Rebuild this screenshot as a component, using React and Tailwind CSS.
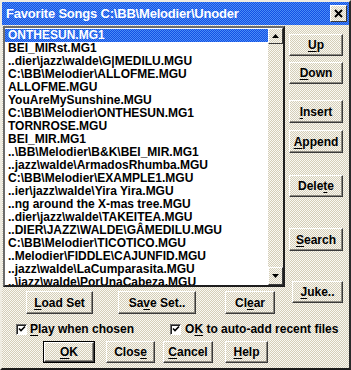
import React from "react";

const DITHER =
  "bg-[image:repeating-conic-gradient(#d4cdb8_0%_25%,#faf9f3_0%_50%)] bg-[length:2px_2px]";
const BLUE =
  "bg-[image:repeating-conic-gradient(#1450e4_0%_25%,#4a8cf6_0%_50%)] bg-[length:2px_2px]";

const items = [
  "ONTHESUN.MG1",
  "BEI_MIRst.MG1",
  "..dier\\jazz\\walde\\G|MEDILU.MGU",
  "C:\\BB\\Melodier\\ALLOFME.MGU",
  "ALLOFME.MGU",
  "YouAreMySunshine.MGU",
  "C:\\BB\\Melodier\\ONTHESUN.MG1",
  "TORNROSE.MGU",
  "BEI_MIR.MG1",
  "..\\BB\\Melodier\\B&K\\BEI_MIR.MG1",
  "..jazz\\walde\\ArmadosRhumba.MGU",
  "C:\\BB\\Melodier\\EXAMPLE1.MGU",
  "..ier\\jazz\\walde\\Yira Yira.MGU",
  "..ng around the X-mas tree.MGU",
  "..dier\\jazz\\walde\\TAKEITEA.MGU",
  "..DIER\\JAZZ\\WALDE\\GÂMEDILU.MGU",
  "C:\\BB\\Melodier\\TICOTICO.MGU",
  "..Melodier\\FIDDLE\\CAJUNFID.MGU",
  "..jazz\\walde\\LaCumparasita.MGU",
  "..\\jazz\\walde\\PorUnaCabeza.MGU",
];

function Label({ pre = "", u, post = "" }) {
  return (
    <span>
      {pre}
      <span className="underline underline-offset-2">{u}</span>
      {post}
    </span>
  );
}

function Btn({ className = "", children }) {
  return (
    <div
      className={`flex items-center justify-center border border-t-white border-l-white border-r-[#3a3a3a] border-b-[#3a3a3a] shadow-[inset_-1px_-1px_0_#8a877e] text-[12px] font-bold text-black ${DITHER} ${className}`}
    >
      {children}
    </div>
  );
}

function Check({ className = "" }) {
  return (
    <div
      className={`w-[11px] h-[11px] bg-white border border-t-[#6b6b6b] border-l-[#6b6b6b] border-r-white border-b-white shadow-[inset_1px_1px_0_#222] flex items-center justify-center ${className}`}
    >
      <svg width="8" height="8" viewBox="0 0 8 8">
        <path d="M1 3.5 L3 5.5 L7 1.5" stroke="#000" strokeWidth="1.6" fill="none" />
      </svg>
    </div>
  );
}

function Arrow({ down }) {
  return (
    <svg width="7" height="4" viewBox="0 0 7 4">
      <path d={down ? "M0 0 H7 L3.5 4 Z" : "M0 4 H7 L3.5 0 Z"} fill="#000" />
    </svg>
  );
}

export default function App() {
  return (
    <div className="w-[351px] h-[370px] overflow-hidden font-['Liberation_Sans',Arial,sans-serif]">
      <div
        className={`w-full h-full flex flex-col border-2 border-t-[#efece2] border-l-[#efece2] border-r-[#2a2a2a] border-b-[#1a1a1a] ${DITHER}`}
      >
        {/* Title bar */}
        <div className={`h-[23px] flex items-center justify-between pl-[4px] pr-[2px] ${BLUE}`}>
          <span className="text-white font-bold text-[13px] tracking-[-0.2px] whitespace-nowrap">
            Favorite Songs C:\BB\Melodier\Unoder
          </span>
          <div
            className={`w-[17px] h-[17px] flex items-center justify-center border border-t-white border-l-white border-r-[#3a3a3a] border-b-[#3a3a3a] ${DITHER}`}
          >
            <svg width="9" height="9" viewBox="0 0 9 9">
              <path d="M1 1 L8 8 M8 1 L1 8" stroke="#000" strokeWidth="2" />
            </svg>
          </div>
        </div>

        {/* Main */}
        <div className="flex flex-row mt-[1px]">
          <div className="ml-[1px] w-[282px] flex flex-col">
            {/* Listbox */}
            <div className="h-[261px] flex flex-row border-2 border-t-[#6b6b6b] border-l-[#6b6b6b] border-r-[#1e1e1e] border-b-[#1e1e1e] bg-white">
              <div className="flex-1 overflow-hidden pt-[1px]">
                {items.map((t, i) => (
                  <div
                    key={i}
                    className={`h-[13px] leading-[13px] pl-[3px] text-[12px] font-bold whitespace-nowrap ${
                      i === 0 ? `${BLUE} text-white` : "text-black"
                    }`}
                  >
                    {t}
                  </div>
                ))}
              </div>
              <div className="w-[15px] flex flex-col">
                <div className={`h-[16px] flex items-center justify-center border border-t-white border-l-white border-r-[#3a3a3a] border-b-[#3a3a3a] ${DITHER}`}>
                  <Arrow />
                </div>
                <div className={`flex-1 ${DITHER}`} />
                <div className={`h-[18px] flex items-center justify-center border border-t-white border-l-white border-r-[#3a3a3a] border-b-[#3a3a3a] ${DITHER}`}>
                  <Arrow down />
                </div>
              </div>
            </div>
            {/* Set buttons */}
            <div className="flex flex-row mt-[4px] h-[23px]">
              <Btn className="ml-[23px] w-[67px]">
                <Label u="L" post="oad Set" />
              </Btn>
              <Btn className="ml-[25px] w-[78px]">
                <Label pre="Sa" u="v" post="e Set.." />
              </Btn>
              <Btn className="ml-[29px] w-[50px]">
                <Label pre="Cl" u="e" post="ar" />
              </Btn>
            </div>
          </div>

          <div className="ml-[4px] w-[54px] flex flex-col">
            <Btn className="mt-[8px] h-[22px]">
              <Label u="U" post="p" />
            </Btn>
            <Btn className="mt-[6px] h-[22px]">
              <Label u="D" post="own" />
            </Btn>
            <Btn className="mt-[16px] h-[23px]">
              <Label u="I" post="nsert" />
            </Btn>
            <Btn className="mt-[7px] h-[23px]">
              <Label u="A" post="ppend" />
            </Btn>
            <Btn className="mt-[22px] h-[22px]">
              <Label pre="Dele" u="t" post="e" />
            </Btn>
            <Btn className="mt-[31px] h-[23px]">
              <Label u="S" post="earch" />
            </Btn>
            <Btn className="mt-[30px] h-[22px] ml-[3px]">
              <Label u="J" post="uke.." />
            </Btn>
          </div>
        </div>

        {/* Checkboxes */}
        <div className="mt-[8px] h-[14px] flex flex-row items-center text-[12px] font-bold text-black">
          <Check className="ml-[14px]" />
          <span className="ml-[3px]">
            <Label u="P" post="lay when chosen" />
          </span>
          <Check className="ml-[36px]" />
          <span className="ml-[4px] whitespace-nowrap">
            <Label pre="O" u="K" post=" to auto-add recent files" />
          </span>
        </div>

        {/* Bottom buttons */}
        <div className="mt-[5px] h-[22px] flex flex-row">
          <div className="ml-[41px] w-[52px] border border-black flex">
            <Btn className="flex-1">
              <Label u="O" post="K" />
            </Btn>
          </div>
          <Btn className="ml-[11px] w-[49px]">
            <Label pre="Clos" u="e" />
          </Btn>
          <Btn className="ml-[8px] w-[50px]">
            <Label u="C" post="ancel" />
          </Btn>
          <Btn className="ml-[12px] w-[43px]">
            <Label u="H" post="elp" />
          </Btn>
        </div>
      </div>
    </div>
  );
}
